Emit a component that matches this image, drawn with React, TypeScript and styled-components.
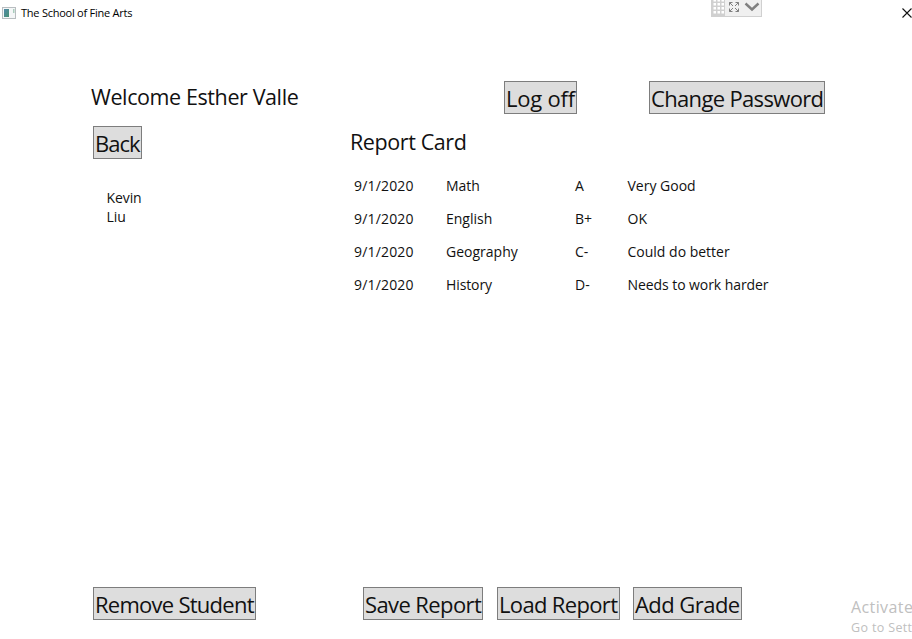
import React from "react";
import styled, { createGlobalStyle } from "styled-components";

const GlobalStyle = createGlobalStyle`
  * { box-sizing: border-box; }
  html, body { margin: 0; overflow: hidden; background: #fff; }
  body { font-family: "Open Sans", "Noto Sans", sans-serif; color: #111; }
`;

const Window = styled.main`
  width: 912px;
  height: 639px;
  display: flex;
  flex-direction: column;
  position: relative;
  overflow: hidden;
  background: #fff;
`;

const TitleBar = styled.header`
  display: flex;
  align-items: center;
  height: 26px;
  padding: 0 0 0 2px;
  gap: 5px;
`;

const Title = styled.span<{ $spacing: number }>`
  flex: 1;
  font-size: 11px;
  line-height: 16px;
  color: #000;
  white-space: nowrap;
  letter-spacing: ${(p) => p.$spacing}px;
`;

const DebugToolbar = styled.div`
  position: absolute;
  left: 711px;
  top: 0;
  width: 51px;
  height: 17px;
`;

const Watermark = styled.aside`
  position: absolute;
  left: 851px;
  top: 597px;
  color: #c0c0c0;
  white-space: nowrap;
`;

const WatermarkTitle = styled.div`
  font-size: 16px;
  line-height: 20px;
  letter-spacing: 0.4px;
`;

const WatermarkText = styled.div`
  font-size: 12.5px;
  line-height: 21px;
  letter-spacing: 0.35px;
`;

const TopRow = styled.section`
  display: flex;
  height: 44px;
  margin-top: 55px;
  padding-left: 91px;
`;

const Heading = styled.h1<{ $width: number; $spacing: number }>`
  margin: 0;
  width: ${(p) => p.$width}px;
  font-size: 21.5px;
  font-weight: 400;
  line-height: 31px;
  white-space: nowrap;
  letter-spacing: ${(p) => p.$spacing}px;
`;

const Button = styled.button<{ $width: number; $gap?: number; $spacing: number }>`
  flex: none;
  width: ${(p) => p.$width}px;
  height: 33px;
  margin: 0 0 0 ${(p) => p.$gap ?? 0}px;
  padding: 2px 0 0 1px;
  border: 1px solid #7d7d7d;
  background: #ddd;
  color: #111;
  font-family: inherit;
  font-size: 22px;
  line-height: 29px;
  text-align: left;
  white-space: nowrap;
  letter-spacing: ${(p) => p.$spacing}px;
`;

const Content = styled.section`
  flex: 1;
  display: flex;
  padding-left: 93px;
`;

const StudentPanel = styled.div`
  width: 257px;
  padding-top: 1px;
`;

const StudentName = styled.div`
  padding: 29px 0 0 13.5px;
  font-size: 14px;
  line-height: 19px;
  letter-spacing: -0.1px;
`;

const Report = styled.div`
  padding-top: 1px;
`;

const Grades = styled.div`
  display: grid;
  grid-template-columns: 92px 129px 52.5px 160px;
  grid-auto-rows: 33px;
  align-items: center;
  margin: 12px 0 0 4px;
  font-size: 14px;
`;

const Cell = styled.span<{ $spacing: number }>`
  white-space: nowrap;
  letter-spacing: ${(p) => p.$spacing}px;
`;

const Footer = styled.footer`
  display: flex;
  height: 52px;
  padding-left: 93px;
`;

const grades: [string, number][][] = [
  [["9/1/2020", 0.17], ["Math", 0], ["A", 0], ["Very Good", 0]],
  [["9/1/2020", 0.17], ["English", 0], ["B+", 0], ["OK", 0]],
  [["9/1/2020", 0.17], ["Geography", 0], ["C-", 0], ["Could do better", 0]],
  [["9/1/2020", 0.17], ["History", -0.1], ["D-", 0], ["Needs to work harder", -0.07]],
];

const AppIcon = () => (
  <svg width="14" height="12" viewBox="0 0 14 12">
    <defs>
      <linearGradient id="pane" x1="0" y1="0" x2="1" y2="1">
        <stop offset="0" stopColor="#5089a8" />
        <stop offset="1" stopColor="#479173" />
      </linearGradient>
    </defs>
    <rect x="0.5" y="0.5" width="13" height="11" fill="#f4f6f7" stroke="#b8bdc0" />
    <rect x="2" y="2" width="5" height="8" fill="url(#pane)" />
    <rect x="11" y="2" width="1.5" height="4" fill="#a9cdbd" />
  </svg>
);

const CloseIcon = () => (
  <svg width="10" height="10" viewBox="0 0 10 10">
    <path d="M0.5 0.5L9.5 9.5M9.5 0.5L0.5 9.5" stroke="#111" strokeWidth="1.1" />
  </svg>
);

const ToolbarIcon = () => (
  <svg width="51" height="17" viewBox="0 0 51 17">
    <rect width="51" height="17" fill="#d0d0d0" />
    <rect x="14" width="36" height="16" fill="#f0f0f0" />
    {[-1, 3, 7, 11].map((y) =>
      [2.5, 6.5, 10.5].map((x) => (
        <rect key={`${x}-${y}`} x={x} y={y} width="2.5" height="2.5" fill="#fff" />
      ))
    )}
    <path
      d="M21.5 2.5h-3v3M18.5 2.5l3.5 3.5M24.500 2.500h3v3M27.500 2.500l-3.500 3.500M18.500 8.500v3h3M18.500 11.500l3.500-3.500M27.500 8.500v3h-3M27.500 11.500l-3.500-3.500"
      stroke="#808080"
      fill="none"
    />
    <path d="M34.500 3.500L41 9.500L47.500 3.500" stroke="#808080" strokeWidth="2.400" fill="none" />
  </svg>
);

export default function App() {
  return (
    <Window>
      <GlobalStyle />
      <TitleBar>
        <AppIcon />
        <Title $spacing={-0.24}>The School of Fine Arts</Title>
        <CloseIcon />
      </TitleBar>
      <DebugToolbar>
        <ToolbarIcon />
      </DebugToolbar>
      <TopRow>
        <Heading $width={413} $spacing={-0.4}>Welcome Esther Valle</Heading>
        <Button $width={73} $spacing={-0.2}>Log off</Button>
        <Button $width={176} $gap={72} $spacing={-0.66}>Change Password</Button>
      </TopRow>
      <Content>
        <StudentPanel>
          <Button $width={49} $spacing={-1}>Back</Button>
          <StudentName>
            Kevin
            <br />
            Liu
          </StudentName>
        </StudentPanel>
        <Report>
          <Heading as="h2" $width={200} $spacing={-0.4}>Report Card</Heading>
          <Grades>
            {grades.map((row, r) =>
              row.map(([text, spacing], c) => (
                <Cell key={`${r}-${c}`} $spacing={spacing}>{text}</Cell>
              ))
            )}
          </Grades>
        </Report>
      </Content>
      <Footer>
        <Button $width={163} $spacing={-0.74}>Remove Student</Button>
        <Button $width={120} $gap={107} $spacing={-0.6}>Save Report</Button>
        <Button $width={123} $gap={14} $spacing={-0.66}>Load Report</Button>
        <Button $width={109} $gap={13} $spacing={-0.55}>Add Grade</Button>
      </Footer>
      <Watermark>
        <WatermarkTitle>Activate Windows</WatermarkTitle>
        <WatermarkText>Go to Settings to activate Windows.</WatermarkText>
      </Watermark>
    </Window>
  );
}
